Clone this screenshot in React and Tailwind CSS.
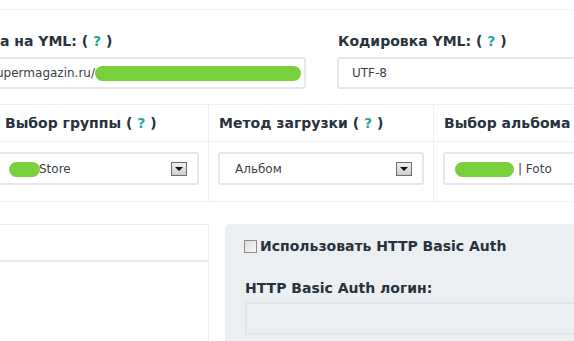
import React from 'react';

const Help = () => (
  <span>
    {' '}( <span className="text-[#26a69a]">?</span> )
  </span>
);

const Blob = ({ w }) => (
  <span className={`inline-block h-[15px] rounded-full bg-[#7acf3d] align-middle ${w}`} />
);

const SelectBox = ({ children }) => (
  <div className="flex h-[33px] items-center justify-between rounded-[3px] border-2 border-[#e4e8eb] bg-white pl-[14px] pr-[10px] text-[12px] text-[#3a3f44]">
    <div className="flex items-center whitespace-nowrap pt-[1px]">{children}</div>
    <div className="flex h-[14px] w-[16px] items-center justify-center border border-[#6b6b6b] bg-gradient-to-b from-[#f0f0f0] to-[#cfcfcf]">
      <div className="h-0 w-0 border-x-[4px] border-t-[4px] border-x-transparent border-t-[#111]" />
    </div>
  </div>
);

export default function App() {
  return (
    <div className="h-[341px] w-[574px] overflow-hidden bg-white font-['DejaVu_Sans',sans-serif] text-[#27323d]">
      <div className="h-[9px]" />
      <div className="border-t border-[#eef1f3]" />

      {/* Row 1 */}
      <div className="-ml-[52px] flex gap-[31px] pt-[21px]">
        <div className="w-[358px] shrink-0">
          <div className="pl-[1px] text-[14px] font-bold leading-[20px] whitespace-nowrap">
            Ссылка на YML:<Help />
          </div>
          <div className="mt-[6px] flex h-[32px] items-center overflow-hidden whitespace-nowrap rounded-[3px] border-2 border-[#e4e8eb] pl-[3px] text-[12px] text-[#3a3f44]">
            http://supermagazin.ru/c<span className="-ml-[7px]"><Blob w="w-[206px]" /></span>
          </div>
        </div>
        <div className="w-[300px] shrink-0">
          <div className="pl-[1px] text-[14px] font-bold leading-[20px] whitespace-nowrap">
            Кодировка YML:<Help />
          </div>
          <div className="mt-[6px] flex h-[32px] items-center rounded-[3px] border-2 border-[#e4e8eb] pl-[13px] text-[12px] text-[#3a3f44]">
            UTF-8
          </div>
        </div>
      </div>

      {/* Row 2 */}
      <div className="mt-[15px] -ml-[16px] flex w-[800px] border-y border-[#eef1f3]">
        {[
          { label: 'Выбор группы', help: true, pad: 'pl-[21px]', value: (<><Blob w="w-[31px]" /><span className="-ml-[1px]">Store</span></>) },
          { label: 'Метод загрузки', help: true, pad: 'pl-[10px]', value: (<span className="pl-[1px]">Альбом</span>) },
          { label: 'Выбор альбома', help: true, pad: 'pl-[10px]', value: (<><span className="-ml-[4px]"><Blob w="w-[59px]" /></span><span className="ml-[4px]">| Foto</span></>) },
        ].map((c) => (
          <div key={c.label} className="w-[225px] shrink-0 border-r border-[#eef1f3]">
            <div className={`flex h-[37px] items-center border-b border-[#eef1f3] pt-[1px] text-[14px] font-bold whitespace-nowrap ${c.pad}`}>
              <span>
                {c.label}
                {c.help && <Help />}
              </span>
            </div>
            <div className="px-[9px] pt-[10px] pb-[16px]">
              <SelectBox>{c.value}</SelectBox>
            </div>
          </div>
        ))}
      </div>

      {/* Row 3 */}
      <div className="mt-[22px] -ml-[16px] flex gap-[16px]">
        <div className="h-[140px] w-[225px] shrink-0 border border-[#e9edef]">
          <div className="h-[37px] border-b-2 border-[#e9edef]" />
        </div>
        <div className="h-[140px] w-[400px] shrink-0 rounded-tl-[5px] bg-[#eceff1] pl-[19px] pt-[14px]">
          <div className="flex items-center gap-[3px]">
            <div className="h-[13px] w-[13px] border border-[#8d8d8d] bg-gradient-to-br from-[#dcdcdc] to-[#f7f7f7]" />
            <div className="text-[14px] font-bold leading-[16px] whitespace-nowrap">Использовать HTTP Basic Auth</div>
          </div>
          <div className="mt-[24px] pl-[1px] text-[14px] font-bold leading-[20px] whitespace-nowrap">
            HTTP Basic Auth логин:
          </div>
          <div className="mt-[4px] ml-[1px] h-[33px] w-[360px] rounded-[3px] border-2 border-[#e1e6ea] bg-[#eceff1]" />
        </div>
      </div>
    </div>
  );
}
